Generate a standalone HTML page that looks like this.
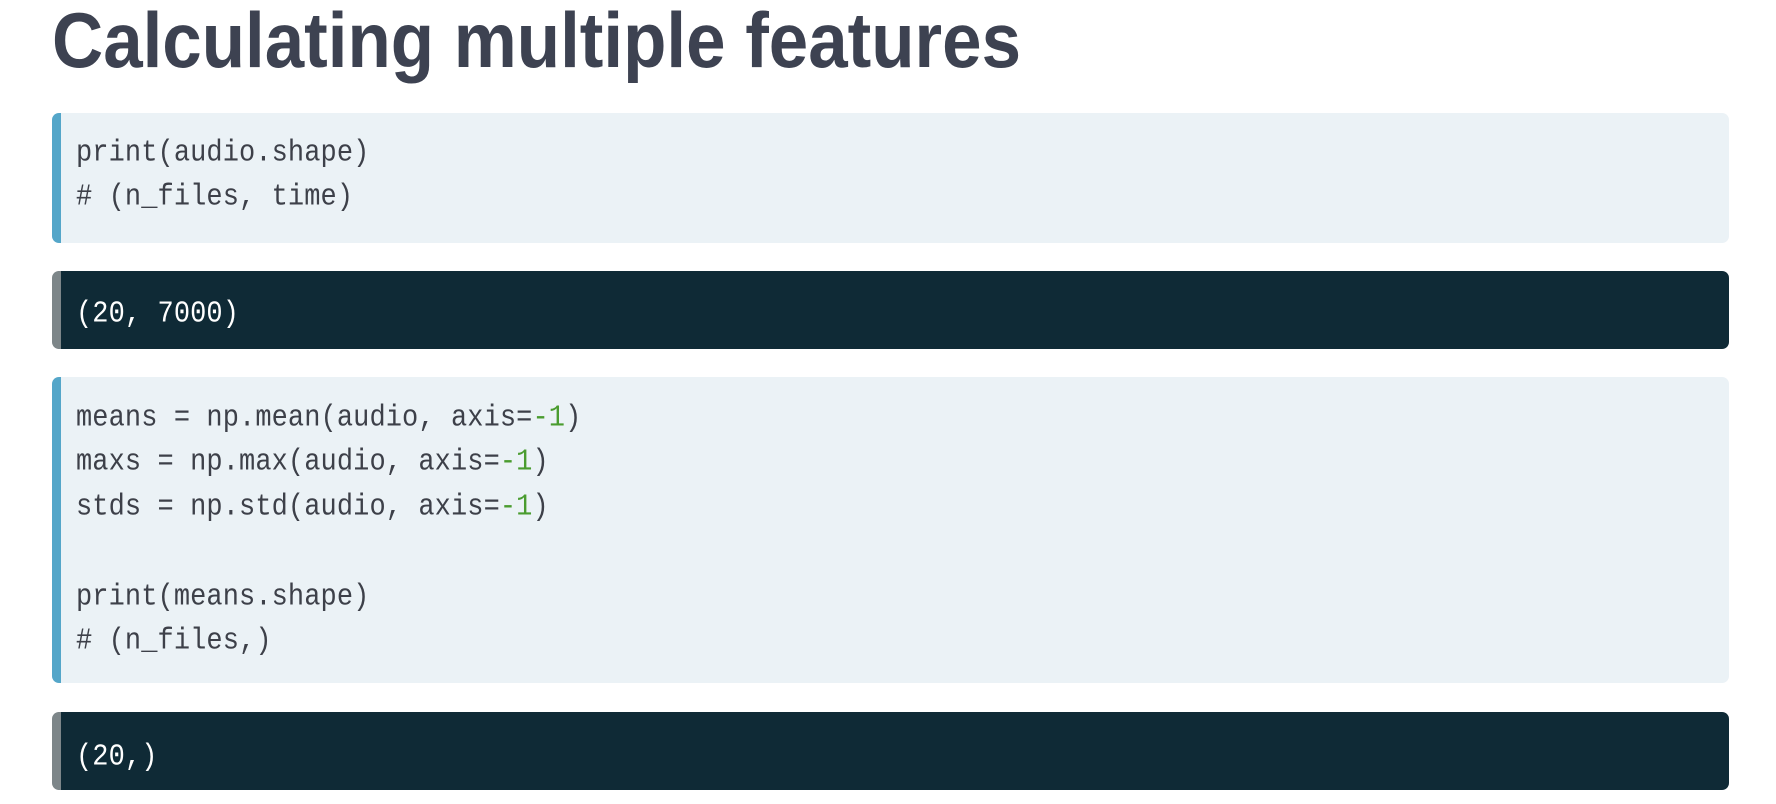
<!DOCTYPE html>
<html><head><meta charset="utf-8"><style>
html,body{margin:0;padding:0;background:#fff;width:1776px;height:804px;overflow:hidden;position:relative}
.blk{position:absolute;left:52px;width:1677px;border-radius:7px;overflow:hidden}
.lt{background:#ebf2f6;border-left:9px solid #54a6c9;box-sizing:border-box}
.dk{background:#0f2a36;border-left:9px solid #7d8689;box-sizing:border-box}
.ln{position:absolute;left:15px;font-family:"Liberation Mono",monospace;font-size:27px;letter-spacing:0.1px;white-space:pre;line-height:30px;height:30px;transform:scaleY(1.12);transform-origin:left center}
.lt .ln{color:#3d4049}
.c{color:#5f6165}
.g{color:#4a9c2f}
.dk .ln{color:#fff}
</style></head><body>
<svg width="1776" height="90" style="position:absolute;left:0;top:0">
<text x="52" y="67" textLength="969" lengthAdjust="spacingAndGlyphs" font-family="Liberation Sans, sans-serif" font-weight="bold" font-size="78" fill="#3d4251">Calculating multiple features</text>
</svg>
<div class="blk lt" style="top:113px;height:130px">
<div class="ln" style="top:26px">print(audio.shape)</div>
<div class="ln c" style="top:70px"># (n_files, time)</div>
</div>
<div class="blk dk" style="top:271px;height:78px">
<div class="ln" style="top:29px">(20, 7000)</div>
</div>
<div class="blk lt" style="top:377px;height:306px">
<div class="ln" style="top:27px">means = np.mean(audio, axis=<span class="g">-1</span>)</div>
<div class="ln" style="top:71px">maxs = np.max(audio, axis=<span class="g">-1</span>)</div>
<div class="ln" style="top:116px">stds = np.std(audio, axis=<span class="g">-1</span>)</div>
<div class="ln" style="top:206px">print(means.shape)</div>
<div class="ln c" style="top:250px"># (n_files,)</div>
</div>
<div class="blk dk" style="top:712px;height:78px">
<div class="ln" style="top:31px">(20,)</div>
</div>
</body></html>
